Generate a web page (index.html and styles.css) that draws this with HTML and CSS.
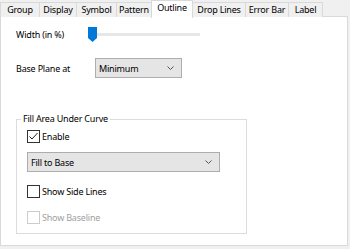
FILE: index.html
```html
<!DOCTYPE html>
<html>
<head>
<meta charset="utf-8">
<link rel="stylesheet" href="styles.css">
</head>
<body>
<div class="dialog">
  <div class="tabs">
    <div class="tab w-group">Group</div>
    <div class="tab w-display">Display</div>
    <div class="tab w-symbol">Symbol</div>
    <div class="tab w-pattern">Pattern</div>
    <div class="tab active w-outline">Outline</div>
    <div class="tab w-drop">Drop Lines</div>
    <div class="tab w-error">Error Bar</div>
    <div class="tab w-label">Label</div>
  </div>
  <div class="pane">
    <div class="row row-width">
      <span class="label label-width">Width (in %)</span>
      <div class="slider">
        <div class="track"></div>
        <svg class="thumb" width="9" height="15" viewBox="0 0 9 15"><polygon points="0,0 9,0 9,11 4.5,15 0,11" fill="#0078d7"/></svg>
      </div>
    </div>
    <div class="row row-base">
      <span class="label label-base">Base Plane at</span>
      <div class="select select-min">
        <span>Minimum</span>
        <svg class="chev" width="7" height="4" viewBox="0 0 7 4"><polyline points="0.5,0.5 3.5,3.5 6.5,0.5" fill="none" stroke="#555" stroke-width="1"/></svg>
      </div>
    </div>
    <fieldset class="group">
      <legend class="legend">Fill Area Under Curve</legend>
      <div class="check-row first">
        <span class="box"><svg width="11" height="11" viewBox="0 0 11 11"><polyline points="1.5,5.5 4,8 9.5,2" fill="none" stroke="#222" stroke-width="1"/></svg></span>
        <span class="check-text">Enable</span>
      </div>
      <div class="select select-fill">
        <span>Fill to Base</span>
        <svg class="chev" width="7" height="4" viewBox="0 0 7 4"><polyline points="0.5,0.5 3.5,3.5 6.5,0.5" fill="none" stroke="#555" stroke-width="1"/></svg>
      </div>
      <div class="check-row side">
        <span class="box"></span>
        <span class="check-text">Show Side Lines</span>
      </div>
      <div class="check-row base disabled">
        <span class="box"></span>
        <span class="check-text">Show Baseline</span>
      </div>
    </fieldset>
  </div>
</div>
</body>
</html>
```
FILE: styles.css
```css
html, body {
  margin: 0;
  padding: 0;
}
body {
  width: 350px;
  height: 249px;
  background: #f0f0f0;
  font-family: "Noto Sans", "Open Sans", sans-serif;
  font-size: 9px;
  letter-spacing: -0.2px;
  color: #000;
  overflow: hidden;
}
.dialog {
  width: 348px;
}
.tabs {
  display: flex;
  align-items: flex-end;
  height: 17px;
  position: relative;
  z-index: 1;
}
.tab {
  box-sizing: border-box;
  height: 15px;
  border: 1px solid #d9d9d9;
  border-bottom: none;
  margin-right: -1px;
  background: #f0f0f0;
  display: flex;
  align-items: center;
  justify-content: center;
  line-height: 1;
  padding-bottom: 1px;
}
.tab.active {
  height: 18px;
  background: #fff;
  margin-bottom: -1px;
  padding-bottom: 4px;
  position: relative;
}
.w-group { width: 40px; }
.w-display { width: 38px; }
.w-symbol { width: 41px; }
.w-pattern { width: 36px; }
.w-outline { width: 42px; }
.w-drop { width: 54px; }
.w-error { width: 44px; }
.w-label { width: 35px; }

.pane {
  box-sizing: border-box;
  width: 348px;
  height: 230px;
  background: #fff;
  border: 1px solid #d9d9d9;
  margin-top: -1px;
  padding: 7px 0 0 15px;
}
.row {
  display: flex;
  align-items: center;
  height: 20px;
}
.label-width { width: 72px; }
.label-base { width: 79px; }
.row-base { margin-top: 14px; }
.slider {
  position: relative;
  width: 112px;
  height: 15px;
}
.track {
  position: absolute;
  left: 2px;
  right: 0;
  top: 6px;
  height: 3px;
  background: #e7e7e7;
}
.thumb {
  position: absolute;
  left: 0;
  top: 0;
  display: block;
}
.select {
  box-sizing: border-box;
  height: 20px;
  background: #e5e5e5;
  border: 1px solid #adadad;
  display: flex;
  align-items: center;
  justify-content: space-between;
  padding: 0 7px 0 3px;
}
.select-min { width: 87px; }
.select-fill {
  width: 193px;
  margin: 6px 0 0 10px;
}
.chev { display: block; }

.group {
  box-sizing: border-box;
  width: 231px;
  margin: 34px 0 0 0;
  padding: 0 0 6px 0;
  border: 1px solid #dcdcdc;
}
.legend {
  margin-left: 4px;
  padding: 0 2px;
  line-height: 14px;
}
.check-row {
  display: flex;
  align-items: center;
  height: 20px;
  margin-left: 10px;
}
.check-row.side { margin-top: 9px; }
.check-row.base { margin-top: 6px; }
.box {
  box-sizing: border-box;
  width: 13px;
  height: 13px;
  border: 1px solid #333;
  background: #fff;
  display: flex;
  align-items: center;
  justify-content: center;
}
.box svg { display: block; }
.check-text { margin-left: 2px; }
.disabled .box { border-color: #cccccc; }
.disabled .check-text { color: #a0a0a0; }
```
